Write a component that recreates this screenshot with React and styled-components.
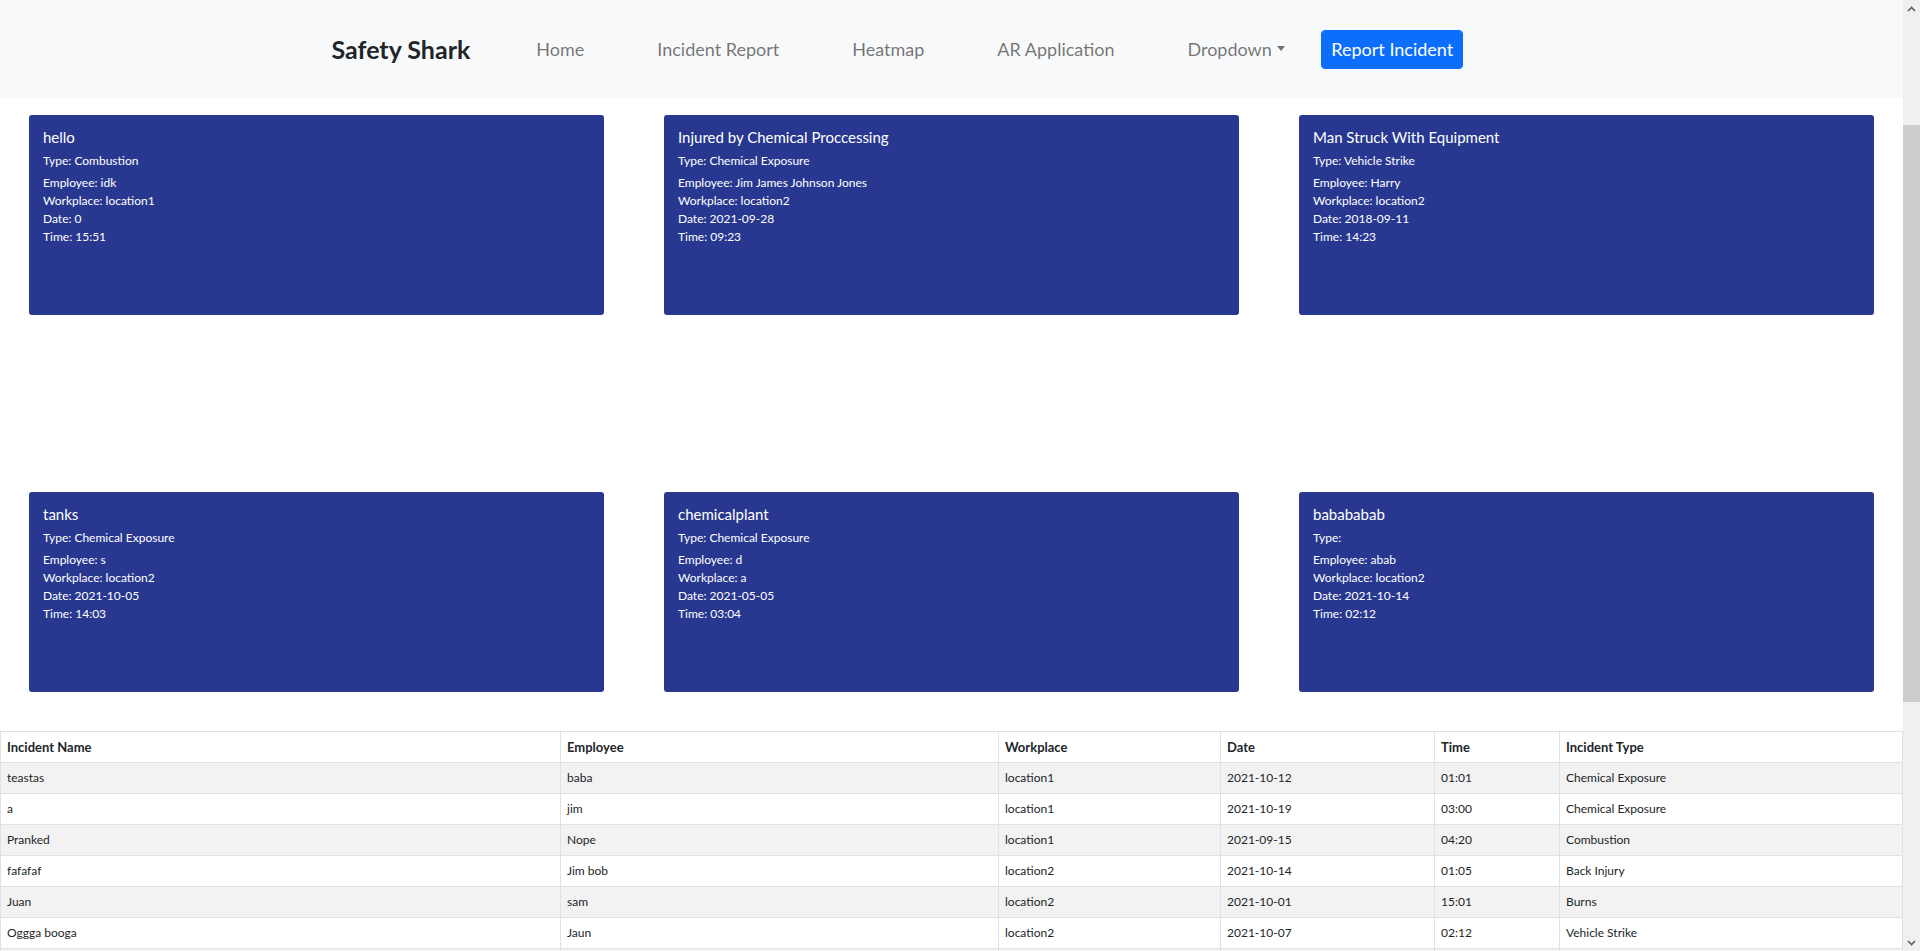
import React from 'react';
import styled, { createGlobalStyle } from 'styled-components';

const GlobalStyle = createGlobalStyle`
  html, body {
    margin: 0;
    padding: 0;
    background: #fff;
    font-family: Lato, "Open Sans", "Liberation Sans", sans-serif;
    color: #212529;
  }
  * { box-sizing: border-box; }
`;

const incidents = [
  { title: 'hello', type: 'Combustion', employee: 'idk', workplace: 'location1', date: '0', time: '15:51' },
  { title: 'Injured by Chemical Proccessing', type: 'Chemical Exposure', employee: 'Jim James Johnson Jones', workplace: 'location2', date: '2021-09-28', time: '09:23' },
  { title: 'Man Struck With Equipment', type: 'Vehicle Strike', employee: 'Harry', workplace: 'location2', date: '2018-09-11', time: '14:23' },
  { title: 'tanks', type: 'Chemical Exposure', employee: 's', workplace: 'location2', date: '2021-10-05', time: '14:03' },
  { title: 'chemicalplant', type: 'Chemical Exposure', employee: 'd', workplace: 'a', date: '2021-05-05', time: '03:04' },
  { title: 'babababab', type: '', employee: 'abab', workplace: 'location2', date: '2021-10-14', time: '02:12' },
];

const rows = [
  ['teastas', 'baba', 'location1', '2021-10-12', '01:01', 'Chemical Exposure'],
  ['a', 'jim', 'location1', '2021-10-19', '03:00', 'Chemical Exposure'],
  ['Pranked', 'Nope', 'location1', '2021-09-15', '04:20', 'Combustion'],
  ['fafafaf', 'Jim bob', 'location2', '2021-10-14', '01:05', 'Back Injury'],
  ['Juan', 'sam', 'location2', '2021-10-01', '15:01', 'Burns'],
  ['Oggga booga', 'Jaun', 'location2', '2021-10-07', '02:12', 'Vehicle Strike'],
  ['', '', '', '', '', ''],
];

const columns = [
  { label: 'Incident Name', width: 560 },
  { label: 'Employee', width: 438 },
  { label: 'Workplace', width: 222 },
  { label: 'Date', width: 214 },
  { label: 'Time', width: 125 },
  { label: 'Incident Type', width: 343 },
];

export default function App() {
  return (
    <Viewport>
      <GlobalStyle />
      <Main>
        <Navbar>
          <NavInner>
            <Brand>Safety Shark</Brand>
            <NavLink>Home</NavLink>
            <NavLink>Incident Report</NavLink>
            <NavLink>Heatmap</NavLink>
            <NavLink>AR Application</NavLink>
            <NavLink>
              Dropdown<Caret />
            </NavLink>
            <ReportButton>Report Incident</ReportButton>
          </NavInner>
        </Navbar>

        <CardGrid>
          {incidents.map((it) => (
            <Card key={it.title}>
              <CardTitle>{it.title}</CardTitle>
              <CardType>Type: {it.type}</CardType>
              <CardLine>Employee: {it.employee}</CardLine>
              <CardLine>Workplace: {it.workplace}</CardLine>
              <CardLine>Date: {it.date}</CardLine>
              <CardLine>Time: {it.time}</CardLine>
            </Card>
          ))}
        </CardGrid>

        <Table>
          <colgroup>
            {columns.map((c) => (
              <col key={c.label} style={{ width: c.width }} />
            ))}
          </colgroup>
          <thead>
            <tr>
              {columns.map((c) => (
                <Th key={c.label}>{c.label}</Th>
              ))}
            </tr>
          </thead>
          <tbody>
            {rows.map((r, i) => (
              <Tr key={i} $striped={i % 2 === 0}>
                {r.map((cell, j) => (
                  <Td key={j}>{cell}</Td>
                ))}
              </Tr>
            ))}
          </tbody>
        </Table>
      </Main>

      <ScrollTrack>
        <ScrollArrow>
          <svg width="9" height="6" viewBox="0 0 9 6">
            <path d="M1 5 L4.5 1.5 L8 5" fill="none" stroke="#606060" strokeWidth="1.6" />
          </svg>
        </ScrollArrow>
        <ThumbArea>
          <Thumb />
        </ThumbArea>
        <ScrollArrow>
          <svg width="9" height="6" viewBox="0 0 9 6">
            <path d="M1 1 L4.5 4.5 L8 1" fill="none" stroke="#606060" strokeWidth="1.6" />
          </svg>
        </ScrollArrow>
      </ScrollTrack>
    </Viewport>
  );
}

const Viewport = styled.div`
  display: flex;
  height: 100vh;
  overflow: hidden;
`;

const Main = styled.main`
  flex: 1;
  min-width: 0;
  overflow: hidden;
`;

const ScrollTrack = styled.div`
  width: 17px;
  flex-shrink: 0;
  background: #f0f0f0;
  display: flex;
  flex-direction: column;
`;

const ScrollArrow = styled.div`
  height: 17px;
  display: flex;
  align-items: center;
  justify-content: center;
`;

const ThumbArea = styled.div`
  flex: 1;
  padding-top: 108px;
  padding-bottom: 232px;
  display: flex;
`;

const Thumb = styled.div`
  flex: 1;
  background: #cdcdcd;
`;

const Navbar = styled.nav`
  background-color: #f8f9fa;
  height: 98px;
  display: flex;
  align-items: center;
`;

const NavInner = styled.div`
  width: 1320px;
  margin: 0 auto;
  padding-left: 40px;
  display: flex;
  align-items: center;
`;

const Brand = styled.a`
  font-size: 25px;
  font-weight: 700;
  color: #212529;
  margin-right: 29.5px;
  cursor: pointer;
`;

const NavLink = styled.a`
  font-size: 18px;
  color: rgba(0, 0, 0, 0.55);
  padding: 8px 36.5px;
  display: flex;
  align-items: center;
  cursor: pointer;
  &:hover { color: rgba(0, 0, 0, 0.7); }
`;

const Caret = styled.span`
  display: inline-block;
  margin-left: 5px;
  width: 0;
  height: 0;
  border-top: 5px solid rgba(0, 0, 0, 0.55);
  border-left: 4.5px solid transparent;
  border-right: 4.5px solid transparent;
  margin-top: -2px;
`;

const ReportButton = styled.button`
  background-color: #0d6efd;
  color: #fff;
  border: 1px solid #0d6efd;
  border-radius: 4px;
  font-family: inherit;
  font-size: 18px;
  height: 39px;
  padding: 0 9px;
  cursor: pointer;
`;

const CardGrid = styled.section`
  display: grid;
  grid-template-columns: repeat(3, 575px);
  column-gap: 60px;
  row-gap: 177px;
  padding: 17px 29px 39px;
`;

const Card = styled.div`
  background-color: #283891;
  color: #fff;
  height: 200px;
  border-radius: 3px;
  padding: 13px 14px;
`;

const CardTitle = styled.div`
  font-size: 15px;
  line-height: 19px;
  margin-bottom: 5px;
`;

const CardType = styled.div`
  font-size: 12px;
  line-height: 18px;
  margin-bottom: 4px;
`;

const CardLine = styled.div`
  font-size: 12px;
  line-height: 18px;
`;

const Table = styled.table`
  width: 100%;
  border-collapse: collapse;
  table-layout: fixed;
  font-size: 12px;
`;

const Th = styled.th`
  text-align: left;
  font-size: 13px;
  font-weight: 700;
  padding: 7px 6px;
  line-height: 16px;
  border: 1px solid #dee2e6;
`;

const Tr = styled.tr`
  background-color: ${(p) => (p.$striped ? '#f2f2f2' : '#fff')};
`;

const Td = styled.td`
  padding: 7px 6px;
  line-height: 16px;
  height: 31px;
  border: 1px solid #dee2e6;
`;
